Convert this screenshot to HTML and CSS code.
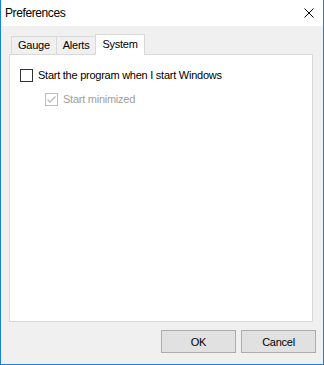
FILE: index.html
```html
<!DOCTYPE html>
<html lang="en">
<head>
    <meta charset="UTF-8">
    <title>Preferences</title>
    <link rel="stylesheet" href="styles.css">
</head>
<body>
    <div class="window">
        <div class="titlebar">
            <span class="title">Preferences</span>
            <svg class="close" width="10" height="10" viewBox="0 0 10 10">
                <path d="M0.5 0.5 L9.5 9.5 M9.5 0.5 L0.5 9.5" stroke="#000" stroke-width="1"/>
            </svg>
        </div>
        <div class="content">
            <div class="tabs">
                <div class="tab">Gauge</div>
                <div class="tab">Alerts</div>
                <div class="tab active">System</div>
            </div>
            <div class="panel">
                <label class="check">
                    <span class="box"></span>
                    <span>Start the program when I start Windows</span>
                </label>
                <label class="check sub disabled">
                    <span class="box">
                        <svg width="11" height="11" viewBox="0 0 11 11">
                            <path d="M1.5 5.5 L4 8 L9.5 2.5" stroke="#bcbcbc" stroke-width="1.4" fill="none"/>
                        </svg>
                    </span>
                    <span>Start minimized</span>
                </label>
            </div>
            <div class="buttons">
                <button class="btn">OK</button>
                <button class="btn">Cancel</button>
            </div>
        </div>
    </div>
</body>
</html>
```

FILE: styles.css
```css
body{
    margin: 0;
    padding: 0;
    font-family: "Liberation Sans", Arial, sans-serif;
    font-size: 11px;
    letter-spacing: -0.25px;
    color: #000;
}
.window{
    width: 324px;
    height: 365px;
    box-sizing: border-box;
    border: 1px solid #1883d7;
    border-top: none;
    display: flex;
    flex-direction: column;
    background-color: #fff;
}
.titlebar{
    height: 26px;
    flex: none;
    display: flex;
    align-items: center;
    justify-content: space-between;
    padding: 0 9px 0 4px;
}
.title{
    font-size: 12px;
    letter-spacing: -0.4px;
}
.content{
    flex: 1;
    background-color: #f0f0f0;
    padding: 8px 10px 11px 8px;
    display: flex;
    flex-direction: column;
}
.tabs{
    display: flex;
    align-items: flex-end;
    padding-left: 2px;
    height: 20px;
    position: relative;
    z-index: 1;
}
.tab{
    height: 17px;
    line-height: 17px;
    padding: 0 6px;
    border: 1px solid #d9d9d9;
    border-bottom: none;
    margin-right: -1px;
    background-color: #f0f0f0;
}
.tab.active{
    height: 20px;
    line-height: 18px;
    background-color: #fff;
    padding: 0 6px;
    margin-bottom: -1px;
}
.panel{
    flex: 1;
    background-color: #fff;
    border: 1px solid #d9d9d9;
    padding: 12px 10px;
}
.check{
    display: flex;
    align-items: center;
    gap: 5px;
    height: 16px;
}
.check.sub{
    margin-top: 8px;
    margin-left: 25px;
}
.box{
    width: 11px;
    height: 11px;
    border: 1px solid #333;
    background-color: #fff;
    display: flex;
}
.disabled{
    color: #a0a0a0;
}
.disabled .box{
    border-color: #bcbcbc;
}
.buttons{
    display: flex;
    justify-content: flex-end;
    gap: 5px;
    margin-top: 8px;
    margin-right: -3px;
}
.btn{
    width: 75px;
    height: 23px;
    border: 1px solid #adadad;
    background-color: #e1e1e1;
    font-family: "Liberation Sans", Arial, sans-serif;
    font-size: 11px;
    letter-spacing: -0.25px;
    padding: 0;
}
```
